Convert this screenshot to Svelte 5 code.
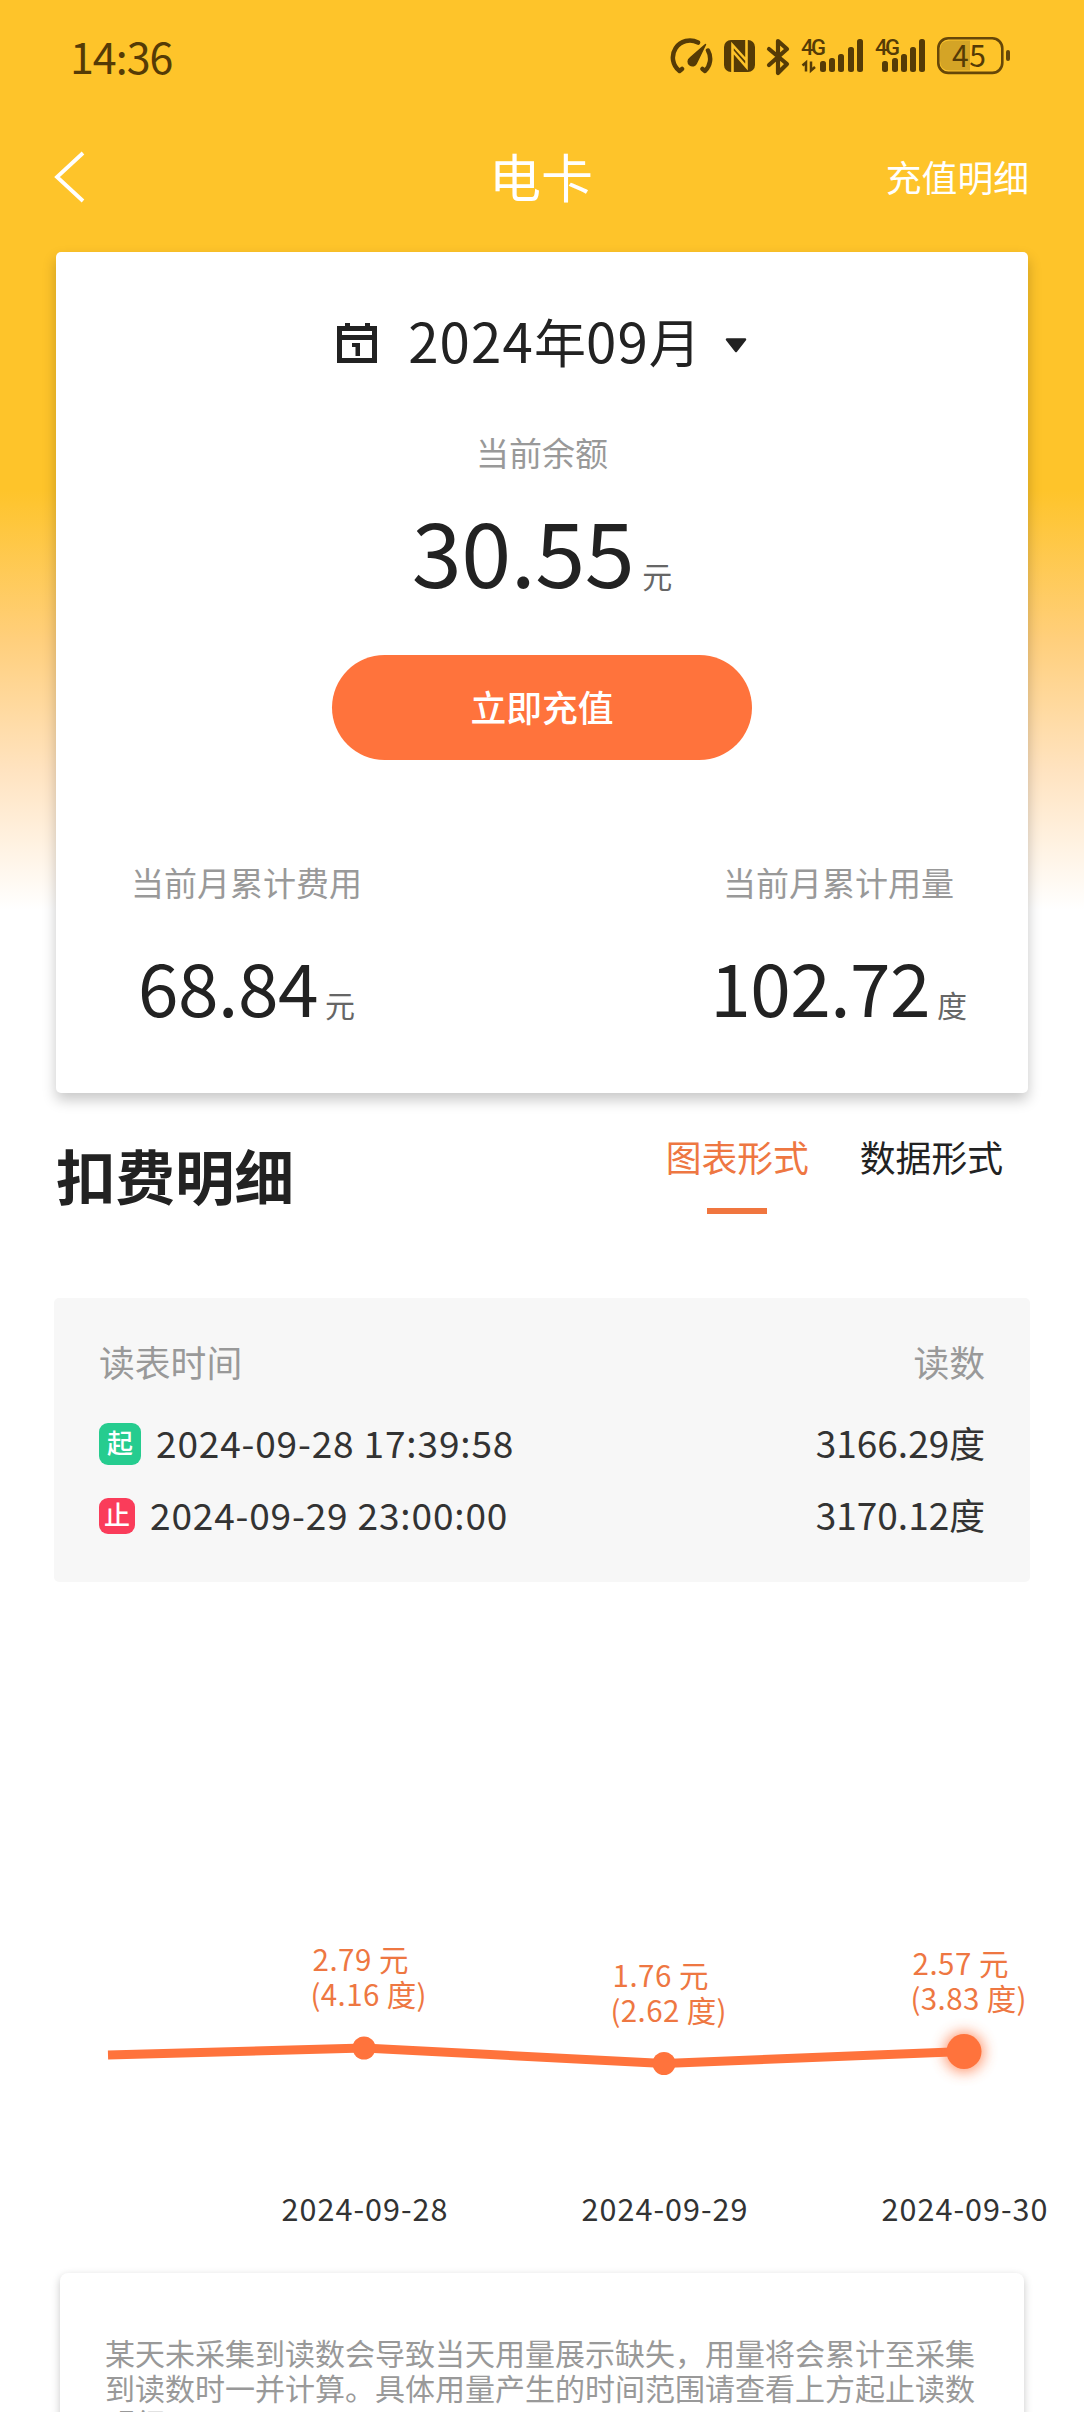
<script>
  const bars1 = [[820, 61], [829, 58], [838, 54], [848, 47], [857, 39]];
  const bars2 = [[882, 61], [892, 58], [901, 54], [910, 47], [919, 39]];
  const readings = [
    { kind: 'start', mark: '起', time: '2024-09-28 17:39:58', value: '3166.29' },
    { kind: 'end', mark: '止', time: '2024-09-29 23:00:00', value: '3170.12' }
  ];
  const points = [
    { x: 364, y: 2048, cost: '2.79', usage: '4.16', date: '2024-09-28' },
    { x: 664, y: 2063.5, cost: '1.76', usage: '2.62', date: '2024-09-29' },
    { x: 964, y: 2051.5, cost: '2.57', usage: '3.83', date: '2024-09-30' }
  ];
  const line = '108,2055 ' + points.map((p) => `${p.x},${p.y}`).join(' ');
</script>

<div class="page">
  <div class="status">
    <span class="clock">14:36</span>
    <svg class="icons" viewBox="670 32 344 48" width="344" height="48">
      <g fill="none" stroke="#553b06" stroke-width="4.500" stroke-linecap="round" stroke-linejoin="round">
        <path d="M682 69l-2.500 2A17 17 0 0 1 698 42.600M708 50.500A17 17 0 0 1 705 71l-2.500-2" />
      </g>
      <path d="M705.500 44.500l-9 18.500a4.300 4.300 0 1 1-6.500-5z" fill="#553b06" stroke="#553b06" stroke-width="1.500" stroke-linejoin="round" />
      <rect x="724" y="40" width="31" height="32" rx="7" fill="#553b06" />
      <path d="M732.500 72V45L747 61M746.500 40V67L732.500 51" fill="none" stroke="#fec42a" stroke-width="2.600" />
      <path d="M769 49l18 15-9 9V41l9 8-18 16" fill="none" stroke="#553b06" stroke-width="4.200" stroke-linejoin="round" stroke-linecap="round" />
      <g fill="#553b06">
        {#each [...bars1, ...bars2] as [x, y]}
          <rect {x} {y} width="6" height={72 - y} rx="2.500" />
        {/each}
      </g>
      <g class="net">
        <text x="801" y="54.700" textLength="25">4G</text>
        <text x="875" y="54.700" textLength="25">4G</text>
      </g>
      <path d="M802.500 65.500l3.500-3v9M811 61.500v9l4-3.500" fill="none" stroke="#553b06" stroke-width="2.500" />
      <path d="M970 40.500h-20q-10 0-10 10v10q0 10 10 10h20z" fill="#d4a426" />
      <rect x="938.300" y="38.300" width="64" height="34.600" rx="10" fill="none" stroke="#664708" stroke-width="2.600" />
      <rect x="1006" y="50" width="4" height="11" rx="2" fill="#664708" />
      <text class="level" x="952" y="66.500" textLength="34">45</text>
    </svg>
  </div>

  <header>
    <svg width="32" height="54" viewBox="0 0 32 54"><path d="M30 3L4 27l26 24" fill="none" stroke="#fff" stroke-width="3.800" /></svg>
    <h1>电卡</h1>
    <span class="link">充值明细</span>
  </header>

  <section class="card">
    <div class="month">
      <svg width="40" height="40" viewBox="0 0 40 40">
        <path d="M0 3h8V0h5v3h15V0h5v3h7v37H0zM5 8v4h30V8zM5 17v18h30V17z" fill="#222" fill-rule="evenodd" />
        <path d="M15 20h8v13h-4.500v-9H15z" fill="#222" />
      </svg>
      <span class="month-text"><span class="num">2024</span>年<span class="num">09</span>月</span>
      <svg class="caret" width="22" height="15" viewBox="0 0 22 15"><path d="M2 1.500h18L11 13z" fill="#222" stroke="#222" stroke-width="2.500" stroke-linejoin="round" /></svg>
    </div>
    <div class="label">当前余额</div>
    <div class="balance"><span>30.55</span><small>元</small></div>
    <button>立即充值</button>
    <div class="totals">
      <div class="total"><div class="label">当前月累计费用</div><div class="amount"><span>68.84</span><small>元</small></div></div>
      <div class="total"><div class="label">当前月累计用量</div><div class="amount"><span>102.72</span><small>度</small></div></div>
    </div>
  </section>

  <div class="section-head">
    <h2>扣费明细</h2>
    <nav><span class="tab active">图表形式</span><span class="tab">数据形式</span></nav>
  </div>

  <section class="meter">
    <div class="row head"><span>读表时间</span><span>读数</span></div>
    {#each readings as r}
      <div class="row">
        <span class="when"><i class={r.kind}>{r.mark}</i><span class="stamp">{r.time}</span></span>
        <span class="value"><span class="reading">{r.value}</span>度</span>
      </div>
    {/each}
  </section>

  <svg class="chart" width="1084" height="691" viewBox="0 1582 1084 691">
    <defs><filter id="glow" x="-100%" y="-100%" width="300%" height="300%"><feGaussianBlur stdDeviation="7" /></filter></defs>
    <polyline points={line} fill="none" stroke="#ff733c" stroke-width="9" stroke-linejoin="round" />
    <circle cx="964" cy="2052" r="20" fill="#ff733c" opacity="0.750" filter="url(#glow)" />
    {#each points as p, i}
      <circle cx={p.x} cy={p.y} r={i === 2 ? 17.5 : 11.5} fill="#ff733c" />
      <text class="tip" x={p.x - 51.5} y={p.y - 77} textLength="96">{p.cost} 元</text>
      <text class="tip" x={p.x - 53.5} y={p.y - 42} textLength="116">({p.usage} 度)</text>
      <text class="date" x={p.x - 82.5} y="2220.500" textLength="166">{p.date}</text>
    {/each}
  </svg>

  <section class="note">某天未采集到读数会导致当天用量展示缺失，用量将会累计至采集到读数时一并计算。具体用量产生的时间范围请查看上方起止读数明细。</section>
</div>

<style>
  :global(body) { margin: 0; }
  .page {
    width: 1084px;
    height: 2412px;
    overflow: hidden;
    box-sizing: border-box;
    font-family: "Noto Sans CJK SC", sans-serif;
    color: #222;
    background: linear-gradient(#fec42a 0, #fec42a 490px, #ffcf7c 640px, #ffe3c0 770px, #fff 910px);
  }
  .status { height: 114px; display: flex; justify-content: space-between; padding: 0 70px; box-sizing: border-box; }
  .clock { font-size: 43px; line-height: 110px; letter-spacing: -1px; color: #553b06; }
  .icons { margin-top: 32px; }
  .net text { font: 500 22px Roboto, sans-serif; fill: #553b06; }
  .level { font-size: 30px; fill: #553b06; }
  header {
    height: 138px;
    padding: 0 55px 12px 53px;
    box-sizing: border-box;
    display: grid;
    grid-template-columns: 1fr auto 1fr;
    align-items: center;
    color: #fff;
  }
  h1 { margin: 0; padding-bottom: 3px; font-size: 52px; font-weight: 400; line-height: 60px; }
  .link { padding-bottom: 3px; font-size: 35.800px; line-height: 50px; text-align: right; }
  .card {
    width: 972px;
    height: 841px;
    margin: 0 auto;
    box-sizing: border-box;
    padding-top: 57px;
    background: #fff;
    border-radius: 5px;
    box-shadow: 0 7px 14px rgba(0, 0, 0, 0.22);
    display: flex;
    flex-direction: column;
    align-items: center;
  }
  .month { height: 68px; display: flex; align-items: center; font-size: 52px; line-height: 68px; }
  .month-text { margin: 0 24px 0 31px; padding-bottom: 6px; white-space: nowrap; }
  .caret { margin-top: 5px; }
  .num { font-size: 1.05em; letter-spacing: 0.021em; }
  .label { font-size: 33px; line-height: 48px; color: #999; white-space: nowrap; }
  .month + .label { margin-top: 51px; }
  .balance { display: flex; align-items: baseline; margin-top: 18px; line-height: 110px; font-size: 90px; }
  small { font-size: 30px; color: #666; margin-left: 7px; }
  .balance small { margin-left: 8px; }
  .balance span { letter-spacing: -0.500px; }
  button {
    width: 420px;
    height: 105px;
    margin-top: 25px;
    padding: 0 0 3px;
    border: 0;
    border-radius: 53px;
    background: #ff733c;
    color: #fff;
    font: 500 35.800px "Noto Sans CJK SC", sans-serif;
  }
  .totals { align-self: stretch; display: flex; justify-content: space-between; margin-top: 98px; padding: 0 61px 0 75px; }
  .total { display: flex; flex-direction: column; align-items: center; }
  .amount { display: flex; align-items: baseline; font-size: 73px; line-height: 100px; margin-top: 29px; }
  .amount span { letter-spacing: -0.500px; }
  .section-head { height: 205px; box-sizing: border-box; padding: 38px 81px 0 56px; display: flex; justify-content: space-between; }
  h2 { margin: 0; font-size: 59.500px; font-weight: 700; line-height: 86px; }
  nav { display: flex; gap: 51px; }
  .tab { font-size: 35.800px; line-height: 50px; }
  .active { color: #ee7742; }
  .active::after { content: ""; display: block; width: 60px; height: 6px; margin: 27px auto 0; background: #f0763f; }
  .meter { width: 976px; height: 284px; margin: 0 auto; box-sizing: border-box; padding: 28px 45px 0; background: #f7f7f7; border-radius: 5px; font-size: 35.800px; color: #333; }
  .row { height: 72px; display: flex; justify-content: space-between; align-items: center; line-height: 72px; }
  .head { height: 82px; padding-bottom: 12px; box-sizing: border-box; color: #999; }
  .when { display: flex; align-items: center; }
  .value { padding-bottom: 5px; }
  .reading { font-size: 37px; }
  .stamp { font-size: 37px; letter-spacing: 0.850px; margin-left: 15px; padding-bottom: 5px; }
  i { font-style: normal; font-weight: 500; color: #fff; text-align: center; font-size: 26px; border-radius: 9px; }
  .start { width: 42px; height: 42px; line-height: 38px; background: #26cc8f; }
  .end { width: 36px; height: 36px; line-height: 32px; background: #fa3c5a; }
  .chart { display: block; }
  .tip { font-size: 29.500px; fill: #ee7742; }
  .date { font-size: 30.500px; fill: #333; }
  .note {
    width: 964px;
    height: 220px;
    margin: 0 auto;
    box-sizing: border-box;
    padding: 62px 47px 0 45px;
    background: #fff;
    border-radius: 8px;
    box-shadow: 0 3px 9px rgba(0, 0, 0, 0.22);
    color: #999;
    font-size: 30px;
    line-height: 35px;
  }
</style>
